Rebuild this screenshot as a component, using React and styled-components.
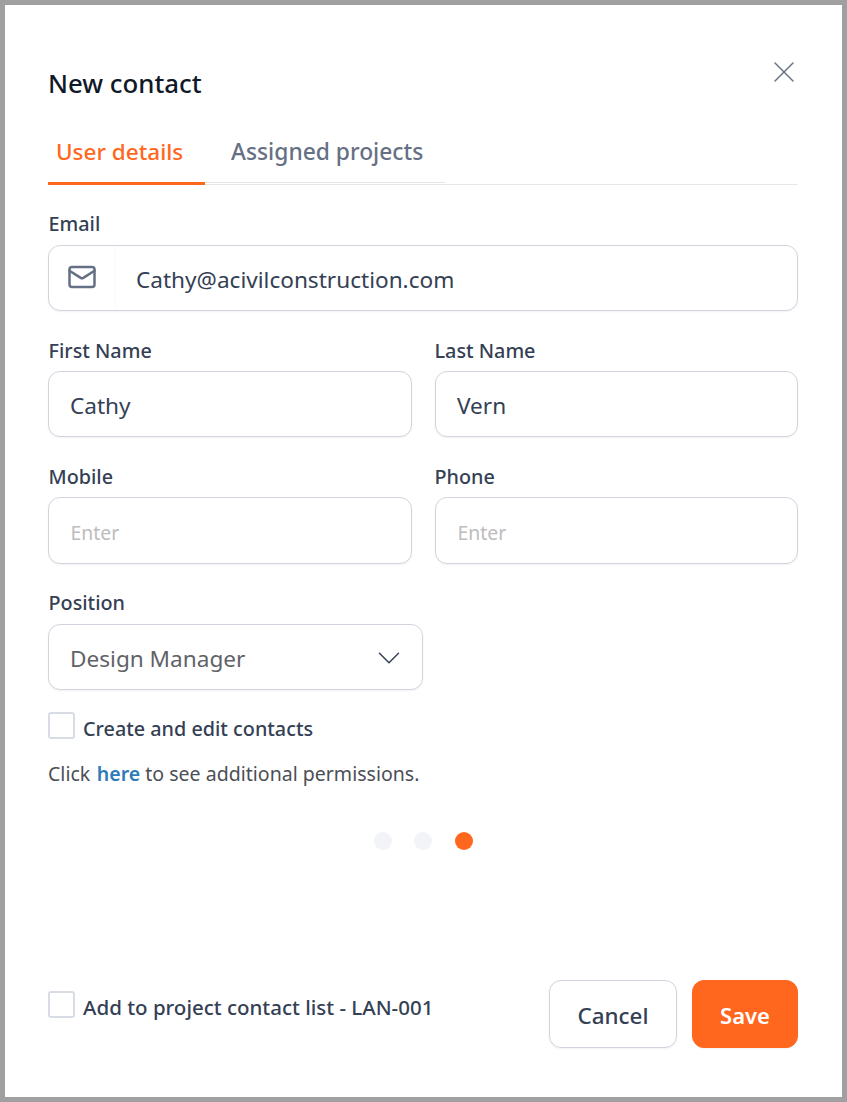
import React from "react";
import styled, { createGlobalStyle } from "styled-components";
import { X, Mail, ChevronDown } from "lucide-react";

const Global = createGlobalStyle`
  html, body { margin: 0; padding: 0; background: #a0a0a0; }
  * { box-sizing: border-box; }
`;

const Frame = styled.div`
  width: 847px;
  height: 1102px;
  padding: 5px;
  background: #a0a0a0;
  font-family: "Noto Sans", "Open Sans", sans-serif;
`;

const Dialog = styled.div`
  height: 1092px;
  background: #fff;
  padding: 58px 44px 0 43px;
  display: flex;
  flex-direction: column;
  position: relative;
`;

const Title = styled.h2`
  margin: 0;
  font-size: 25.8px;
  line-height: 41px;
  font-weight: 500;
  color: #111827;
`;

const CloseButton = styled.button`
  position: absolute;
  top: 49px;
  right: 40px;
  width: 36px;
  height: 36px;
  padding: 0;
  border: 0;
  background: none;
  color: #6b7280;
  display: flex;
  align-items: center;
  justify-content: center;
`;

const TabBar = styled.div`
  display: flex;
  height: 56px;
  margin-top: 25px;
  border-bottom: 1px solid #e5e7eb;
`;

const Tab = styled.div`
  height: ${(p) => (p.$active ? "56px" : "54px")};
  padding: 0 0 0 ${(p) => (p.$active ? "8px" : "26px")};
  width: ${(p) => (p.$active ? "157px" : "240px")};
  font-size: ${(p) => (p.$active ? "22.5px" : "22.8px")};
  line-height: 45px;
  font-weight: 500;
  white-space: nowrap;
  color: ${(p) => (p.$active ? "#ff671f" : "#667085")};
  border-bottom: ${(p) => (p.$active ? "3px solid #ff671f" : "1px solid #e5e7eb")};
`;

const Label = styled.label`
  display: block;
  font-size: 19.8px;
  line-height: 26px;
  font-weight: 500;
  color: #344054;
  margin: 0 0 ${(p) => p.$gap || 7}px ${(p) => (p.$flush ? "-0.5px" : "0.5px")};
`;

const Field = styled.div`
  min-width: 0;
`;

const EmailField = styled(Field)`
  margin-top: 26px;
`;

const Shell = styled.div`
  height: ${(p) => p.$h || 66}px;
  border: 1px solid #d0d5dd;
  border-radius: 12px;
  background: #fff;
  box-shadow: 0 1px 2px rgba(16, 24, 40, 0.05);
  display: flex;
  align-items: center;
  font-size: 22.6px;
  color: ${(p) => (p.$muted ? "#bdbdbd" : "#344054")};
  padding: 2px 21px 0;
`;

const EmailShell = styled(Shell)`
  padding: 0;
`;

const IconCell = styled.div`
  width: 67px;
  height: 100%;
  flex: none;
  border-right: 1px solid #fafafb;
  color: #667085;
  display: flex;
  align-items: center;
  justify-content: center;
  padding: 0 0 2px 0;
`;

const EmailValue = styled.span`
  padding: 2px 0 0 20px;
`;

const PlaceholderText = styled.span`
  font-size: 19.4px;
  padding: 2px 0 0 0.5px;
`;

const Row = styled.div`
  display: grid;
  grid-template-columns: 364px 363px;
  gap: 23px;
  margin-top: 27px;
`;

const PositionField = styled(Field)`
  width: 375px;
  margin-top: 26px;
`;

const SelectShell = styled(Shell)`
  justify-content: space-between;
  color: #5f6368;
  padding-right: 14px;
`;

const SelectChevron = styled(ChevronDown)`
  margin-top: 0;
  color: #344054;
`;

const CheckRow = styled.div`
  display: flex;
  align-items: center;
  gap: 8px;
`;

const PermissionRow = styled(CheckRow)`
  margin-top: 22px;
`;

const Box = styled.span`
  width: 27px;
  height: 27px;
  flex: none;
  border: 2px solid #d8dce4;
  border-radius: 3px;
  background: #fff;
`;

const CheckText = styled.span`
  font-size: 19.8px;
  line-height: 27px;
  font-weight: 500;
  color: #344054;
  position: relative;
  top: 3px;
`;

const Hint = styled.p`
  margin: 21px 0 0;
  font-size: 19.55px;
  line-height: 27px;
  color: #4b4f56;
`;

const HintLink = styled.a`
  color: #2f7ab8;
  font-weight: 600;
  margin-left: 1.5px;
`;

const Dots = styled.div`
  display: flex;
  justify-content: center;
  gap: 22.5px;
  margin-top: 45px;
`;

const Dot = styled.span`
  width: 18px;
  height: 18px;
  border-radius: 50%;
  background: ${(p) => (p.$on ? "#ff671f" : "#f2f4f7")};
`;

const Footer = styled.div`
  display: flex;
  justify-content: space-between;
  align-items: flex-start;
  margin-top: 130px;
`;

const FooterCheck = styled(CheckRow)`
  margin-top: 11px;
`;

const FooterText = styled(CheckText)`
  font-size: 20.5px;
`;

const Actions = styled.div`
  display: flex;
  gap: 15px;
`;

const Button = styled.button`
  height: 68px;
  width: ${(p) => p.$w}px;
  border-radius: 12px;
  font-family: inherit;
  font-size: ${(p) => (p.$primary ? "22px" : "22.4px")};
  font-weight: ${(p) => (p.$primary ? 600 : 500)};
  padding: 2px 0 0;
  border: 1px solid ${(p) => (p.$primary ? "#ff671f" : "#d0d5dd")};
  color: ${(p) => (p.$primary ? "#fff" : "#344054")};
  background: ${(p) => (p.$primary ? "#ff671f" : "#fff")};
  box-shadow: 0 1px 2px rgba(16, 24, 40, 0.05);
`;

export default function App() {
  return (
    <Frame>
      <Global />
      <Dialog>
        <CloseButton aria-label="Close">
          <X size={36} strokeWidth={1.5} absoluteStrokeWidth />
        </CloseButton>
        <Title>New contact</Title>
        <TabBar>
          <Tab $active>User details</Tab>
          <Tab>Assigned projects</Tab>
        </TabBar>
        <EmailField>
          <Label $gap={8}>Email</Label>
          <EmailShell>
            <IconCell>
              <Mail size={30} strokeWidth={2} />
            </IconCell>
            <EmailValue>Cathy@acivilconstruction.com</EmailValue>
          </EmailShell>
        </EmailField>
        <Row>
          <Field>
            <Label>First Name</Label>
            <Shell>Cathy</Shell>
          </Field>
          <Field>
            <Label $flush>Last Name</Label>
            <Shell>Vern</Shell>
          </Field>
        </Row>
        <Row>
          <Field>
            <Label>Mobile</Label>
            <Shell $h={67} $muted><PlaceholderText>Enter</PlaceholderText></Shell>
          </Field>
          <Field>
            <Label $flush>Phone</Label>
            <Shell $h={67} $muted><PlaceholderText>Enter</PlaceholderText></Shell>
          </Field>
        </Row>
        <PositionField>
          <Label $gap={8}>Position</Label>
          <SelectShell>
            Design Manager
            <SelectChevron size={38} strokeWidth={1.5} absoluteStrokeWidth />
          </SelectShell>
        </PositionField>
        <PermissionRow>
          <Box />
          <CheckText>Create and edit contacts</CheckText>
        </PermissionRow>
        <Hint>
          Click <HintLink>here</HintLink> to see additional permissions.
        </Hint>
        <Dots>
          <Dot />
          <Dot />
          <Dot $on />
        </Dots>
        <Footer>
          <FooterCheck>
            <Box />
            <FooterText>Add to project contact list - LAN-001</FooterText>
          </FooterCheck>
          <Actions>
            <Button $w={128}>Cancel</Button>
            <Button $w={106} $primary>Save</Button>
          </Actions>
        </Footer>
      </Dialog>
    </Frame>
  );
}
